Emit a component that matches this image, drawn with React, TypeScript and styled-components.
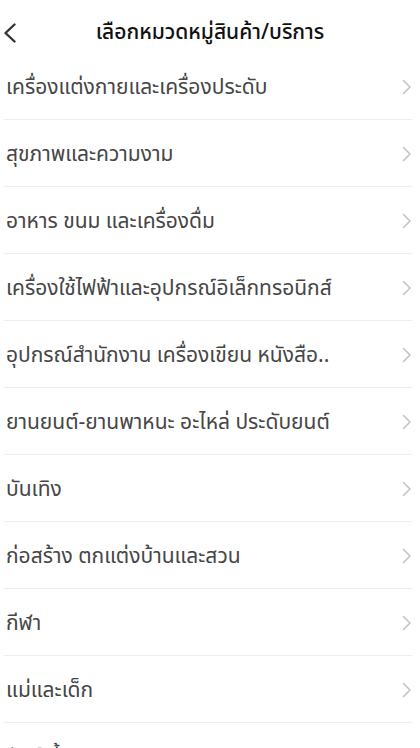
import React from "react";
import styled, { createGlobalStyle } from "styled-components";

const Global = createGlobalStyle`
  html, body { margin: 0; padding: 0; background: #ffffff; }
  body { font-family: "Noto Sans", "Noto Sans Thai", "DejaVu Sans", sans-serif; -webkit-font-smoothing: antialiased; }
  * { box-sizing: border-box; }
`;

const Page = styled.div`
  width: 420px;
  height: 748px;
  overflow: hidden;
  background: #fff;
  display: flex;
  flex-direction: column;
`;

const Header = styled.header`
  height: 53px;
  flex: 0 0 53px;
  padding-top: 12px;
  display: grid;
  grid-template-columns: 40px 1fr 40px;
  align-items: center;
`;

const BackButton = styled.button`
  border: none;
  background: none;
  padding: 0 0 0 3px;
  height: 100%;
  display: flex;
  align-items: center;
  cursor: pointer;
`;

const Title = styled.h1`
  margin: 0;
  text-align: center;
  font-size: 21px;
  font-weight: 500;
  color: #111;
`;

const List = styled.ul`
  list-style: none;
  margin: 0;
  padding: 0;
`;

const Row = styled.li`
  height: 67px;
  margin: 0 8px 0 4px;
  padding-left: 2px;
  padding-top: 2px;
  display: flex;
  align-items: center;
  justify-content: space-between;
  border-bottom: 1px solid #efefef;
`;

const Label = styled.span`
  font-size: 21px;
  color: #464646;
  white-space: nowrap;
`;

const Chevron = () => (
  <svg width="10" height="16" viewBox="0 0 10 16" fill="none">
    <path d="M1.5 1.5 L8 8 L1.5 14.5" stroke="#c4c4c4" strokeWidth="1.6" strokeLinecap="round" strokeLinejoin="round" />
  </svg>
);

const BackIcon = () => (
  <svg width="14" height="20" viewBox="0 0 14 20" fill="none">
    <path d="M11.5 1.5 L2.5 10 L11.5 18.5" stroke="#333" strokeWidth="2.4" strokeLinecap="round" strokeLinejoin="round" />
  </svg>
);

const items = [
  "เครื่องแต่งกายและเครื่องประดับ",
  "สุขภาพและความงาม",
  "อาหาร ขนม และเครื่องดื่ม",
  "เครื่องใช้ไฟฟ้าและอุปกรณ์อิเล็กทรอนิกส์",
  "อุปกรณ์สำนักงาน เครื่องเขียน หนังสือ..",
  "ยานยนต์-ยานพาหนะ อะไหล่ ประดับยนต์",
  "บันเทิง",
  "ก่อสร้าง ตกแต่งบ้านและสวน",
  "กีฬา",
  "แม่และเด็ก",
  "สัตว์เลี้ยง",
];

export default function App() {
  return (
    <Page>
      <Global />
      <Header>
        <BackButton aria-label="back"><BackIcon /></BackButton>
        <Title>เลือกหมวดหมู่สินค้า/บริการ</Title>
        <span />
      </Header>
      <List>
        {items.map((t) => (
          <Row key={t}>
            <Label>{t}</Label>
            <Chevron />
          </Row>
        ))}
      </List>
    </Page>
  );
}
